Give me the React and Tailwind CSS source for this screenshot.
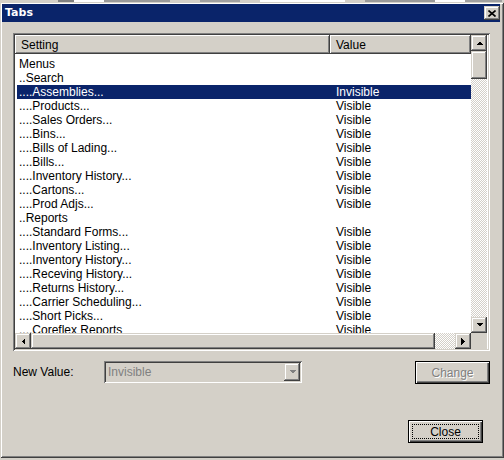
import React from "react";

const raised =
  "shadow-[inset_-1px_-1px_#404040,inset_1px_1px_#d4d0c8,inset_-2px_-2px_#808080,inset_2px_2px_#ffffff]";
const sunken =
  "shadow-[inset_1px_1px_#808080,inset_-1px_-1px_#ffffff,inset_2px_2px_#404040,inset_-2px_-2px_#d4d0c8]";
const checker =
  "bg-[image:repeating-conic-gradient(#d4d0c8_0%_25%,#ffffff_0%_50%)] bg-[length:2px_2px]";

const rows = [
  ["Menus", ""],
  ["..Search", ""],
  ["....Assemblies...", "Invisible"],
  ["....Products...", "Visible"],
  ["....Sales Orders...", "Visible"],
  ["....Bins...", "Visible"],
  ["....Bills of Lading...", "Visible"],
  ["....Bills...", "Visible"],
  ["....Inventory History...", "Visible"],
  ["....Cartons...", "Visible"],
  ["....Prod Adjs...", "Visible"],
  ["..Reports", ""],
  ["....Standard Forms...", "Visible"],
  ["....Inventory Listing...", "Visible"],
  ["....Inventory History...", "Visible"],
  ["....Receving History...", "Visible"],
  ["....Returns History...", "Visible"],
  ["....Carrier Scheduling...", "Visible"],
  ["....Short Picks...", "Visible"],
  ["....Coreflex Reports", "Visible"],
];

function Arrow({ dir, color = "#000" }) {
  const pts = {
    up: "0,4 7,4 3.5,0.5",
    down: "0,0 7,0 3.5,3.5",
    left: "4,0 4,7 0.5,3.5",
    right: "0,0 0,7 3.5,3.5",
  }[dir];
  const vertical = dir === "up" || dir === "down";
  return (
    <svg width={vertical ? 7 : 4} height={vertical ? 4 : 7} shapeRendering="crispEdges">
      <polygon points={pts} fill={color} />
    </svg>
  );
}

function ScrollBtn({ dir, className = "" }) {
  return (
    <div className={`flex items-center justify-center bg-[#d4d0c8] ${raised} ${className}`}>
      <Arrow dir={dir} />
    </div>
  );
}

function Header() {
  const cell =
    "h-full flex items-center pl-[6px] shadow-[inset_-1px_-1px_#404040,inset_1px_1px_#ffffff,inset_-2px_-2px_#808080] bg-[#d4d0c8]";
  return (
    <div className="flex h-[19px] shrink-0">
      <div className={`${cell} w-[315px]`}>Setting</div>
      <div className={`${cell} w-[141px]`}>Value</div>
    </div>
  );
}

function ListBox() {
  return (
    <div className={`ml-[11px] mt-[11px] w-[477px] h-[318px] p-[2px] bg-white ${sunken}`}>
      <div className="flex h-[314px]">
        <div className="w-[456px] flex flex-col">
          <div className="h-[298px] flex flex-col overflow-hidden">
            <Header />
            <div className="pt-[3px] pl-[2px]">
              {rows.map(([name, value], i) => {
                const sel = i === 2;
                return (
                  <div
                    key={i}
                    className={`flex h-[14px] w-[454px] leading-[14px] ${
                      sel ? "bg-[#0a246a] text-white" : "text-black"
                    }`}
                  >
                    <div className="w-[317px] pl-[2px] whitespace-nowrap">{name}</div>
                    <div className="pl-[2px] whitespace-nowrap">{value}</div>
                  </div>
                );
              })}
            </div>
          </div>
          <div className="flex h-[16px]">
            <ScrollBtn dir="left" className="w-[16px]" />
            <div className={`w-[404px] bg-[#d4d0c8] ${raised}`} />
            <div className={`w-[20px] ${checker}`} />
            <ScrollBtn dir="right" className="w-[16px]" />
          </div>
        </div>
        <div className="w-[16px] flex flex-col">
          <div className="h-[298px] flex flex-col">
            <ScrollBtn dir="up" className="h-[16px]" />
            <div className={`h-[28px] bg-[#d4d0c8] ${raised}`} />
            <div className={`flex-1 ${checker}`} />
            <ScrollBtn dir="down" className="h-[16px]" />
          </div>
          <div className="h-[16px] bg-[#d4d0c8]" />
        </div>
      </div>
    </div>
  );
}

export default function App() {
  return (
    <div className="w-[504px] h-[460px] bg-[#d4d0c8] overflow-hidden font-['Liberation_Sans',Arial,sans-serif] text-[12px]">
      {/* bit of the app window behind the dialog */}
      <div className="h-[2px] flex bg-[#d4d0c8]">
        <div className="w-[58px]" />
        <div className="w-[16px] bg-[#808080]" />
        <div className="w-[30px] bg-white" />
        <div className="w-[66px] bg-[#9a9a9a]" />
        <div className="w-[30px]" />
        <div className="w-[40px] bg-[#a0a0a0]" />
        <div className="w-[20px]" />
        <div className="w-[85px] bg-white" />
        <div className="w-[20px]" />
        <div className="w-[70px] bg-[#9a9a9a]" />
        <div className="w-[30px] bg-white" />
        <div className="w-[37px] bg-[#a0a0a0]" />
      </div>
      <div
        className={`h-[456px] pt-[2px] pl-[2px] pr-[4px] pb-[2px] bg-[#d4d0c8] shadow-[inset_1px_1px_#d4d0c8,inset_-1px_-1px_#404040,inset_2px_2px_#ffffff,inset_-2px_-2px_#808080]`}
      >
        <div className="h-[18px] bg-[#0a246a] flex items-center justify-between pl-[3px] pr-[0px]">
          <span className="text-white font-bold text-[11px] font-['DejaVu_Sans',Verdana,sans-serif]">
            Tabs
          </span>
          <div className={`w-[16px] h-[14px] flex items-center justify-center bg-[#d4d0c8] ${raised}`}>
            <svg width="8" height="7" viewBox="0 0 8 7">
              <path d="M0.5 0.5 L7.5 6.5 M7.5 0.5 L0.5 6.5" stroke="#000" strokeWidth="1.6" />
            </svg>
          </div>
        </div>

        <ListBox />

        <div className="flex items-start mt-[10px] ml-[11px]">
          <div className="w-[91px] h-[22px] flex items-center text-black">New Value:</div>
          <div className={`w-[198px] h-[22px] p-[2px] flex bg-[#d4d0c8] ${sunken}`}>
            <div className="flex-1 pl-[2px] flex items-center text-[#808080]">Invisible</div>
            <div className={`w-[16px] h-[18px] flex items-center justify-center ${raised}`}>
              <Arrow dir="down" color="#808080" />
            </div>
          </div>
          <div className="ml-[113px] w-[75px] h-[23px] border border-black flex">
            <div
              className={`flex-1 flex items-center justify-center text-[#808080] [text-shadow:1px_1px_0_#ffffff] shadow-[inset_1px_1px_#ffffff,inset_-1px_-1px_#404040,inset_-2px_-2px_#808080]`}
            >
              Change
            </div>
          </div>
        </div>

        <div className="mt-[36px] ml-[406px] w-[75px] h-[23px] border border-black flex">
          <div className="flex-1 p-[3px] flex shadow-[inset_1px_1px_#ffffff,inset_-1px_-1px_#404040,inset_-2px_-2px_#808080]">
            <div className="flex-1 border border-dotted border-black flex items-center justify-center text-black">
              Close
            </div>
          </div>
        </div>
      </div>
    </div>
  );
}
